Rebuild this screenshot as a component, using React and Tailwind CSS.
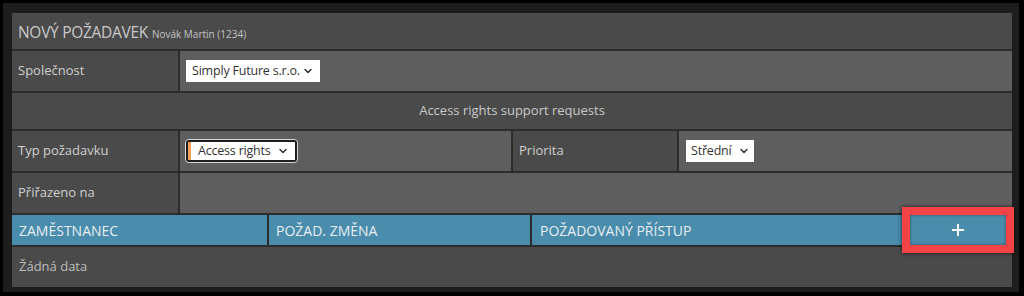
import { ChevronDown, Plus } from "lucide-react"

function Select({ label, className = "" }) {
  return (
    <div className={`flex items-center bg-white text-[12.5px] text-[#333] whitespace-nowrap ${className}`}>
      <span className="flex-1 tracking-[-0.2px]">{label}</span>
      <ChevronDown className="w-[12px] h-[12px] shrink-0 text-[#333]" strokeWidth={3} />
    </div>
  )
}

export default function App() {
  return (
    <div
      className="w-[1024px] h-[296px] bg-black pt-[3px] pl-[3px] pr-[5px] pb-[4px] overflow-hidden"
      style={{ fontFamily: '"Open Sans", "Noto Sans", sans-serif' }}
    >
      <div className="h-full bg-[#1d1d1d] pt-[10px] pl-[9px] pr-[7px] pb-[5px]">
        <div className="w-[1000px] h-[274px] bg-[#2c2c2c] flex flex-col">
          {/* Header */}
          <div className="h-[36px] mb-[2px] bg-[#4a4a4a] flex items-center pl-[6px] pt-[3px]">
            <span className="text-[15.5px] text-[#c9c9c9] tracking-[-0.3px]">NOVÝ POŽADAVEK</span>
            <span className="text-[10px] text-[#c4c4c4] ml-[4px] mt-[3px]">Novák Martin (1234)</span>
          </div>

          {/* Společnost */}
          <div className="h-[40px] mb-[2px] flex gap-[2px]">
            <div className="w-[166px] bg-[#4a4a4a] flex items-center pl-[6px] text-[13px] text-[#cfcfcf]">
              Společnost
            </div>
            <div className="flex-1 bg-[#5e5e5e] flex items-center pl-[6px]">
              <Select label="Simply Future s.r.o." className="w-[134px] h-[22px] pl-[6px] pr-[6px]" />
            </div>
          </div>

          {/* Section title */}
          <div className="h-[36px] mb-[2px] bg-[#4a4a4a] flex items-center justify-center text-[13px] text-[#c9c9c9]">
            Access rights support requests
          </div>

          {/* Typ požadavku / Priorita */}
          <div className="h-[40px] mb-[2px] flex gap-[2px]">
            <div className="w-[166px] bg-[#4a4a4a] flex items-center pl-[6px] text-[13px] text-[#cfcfcf]">
              Typ požadavku
            </div>
            <div className="w-[331px] bg-[#5e5e5e] flex items-center pl-[5px]">
              <div className="w-[113px] h-[24px] rounded-[4px] border border-[#d8d8d8] bg-[#d8d8d8]">
                <div className="h-full rounded-[3px] border-2 border-[#1f1f1f] bg-white flex items-center overflow-hidden">
                  <div className="w-[3px] h-full shrink-0 bg-[#f0a05a]" />
                  <Select label="Access rights" className="flex-1 h-full pl-[7px] pr-[6px]" />
                </div>
              </div>
            </div>
            <div className="w-[164px] bg-[#4a4a4a] flex items-center pl-[6px] text-[13px] text-[#cfcfcf]">
              Priorita
            </div>
            <div className="flex-1 bg-[#5e5e5e] flex items-center pl-[7px]">
              <Select label="Střední" className="w-[68px] h-[22px] pl-[5px] pr-[4px]" />
            </div>
          </div>

          {/* Přiřazeno na */}
          <div className="h-[40px] mb-[2px] flex gap-[2px]">
            <div className="w-[166px] bg-[#4a4a4a] flex items-center pl-[6px] text-[13px] text-[#cfcfcf]">
              Přiřazeno na
            </div>
            <div className="flex-1 bg-[#5e5e5e]" />
          </div>

          {/* Table header */}
          <div className="relative h-[30px] mb-[2px] flex gap-[2px] text-[14px] text-[#e6eef2]">
            <div className="w-[255px] bg-[#4a8cab] flex items-center pl-[7px]">ZAMĚSTNANEC</div>
            <div className="w-[261px] bg-[#4a8cab] flex items-center pl-[7px]">POŽAD. ZMĚNA</div>
            <div className="flex-1 bg-[#4a8cab] flex items-center pl-[8px]">POŽADOVANÝ PŘÍSTUP</div>
            <div className="absolute left-[890px] top-[-8px] w-[112px] h-[46px] border-[8px] border-[#f44346] shadow-[0_0_4px_rgba(0,0,0,0.7)]">
              <div className="w-full h-full bg-[#4a8cab] shadow-[inset_0_0_3px_rgba(0,0,0,0.45)] flex items-center justify-center">
                <Plus className="w-[18px] h-[18px] text-white" strokeWidth={2.6} />
              </div>
            </div>
          </div>

          {/* Empty */}
          <div className="flex-1 bg-[#4a4a4a] flex items-center pl-[7px] text-[13px] text-[#bdbdbd]">
            Žádná data
          </div>
        </div>
      </div>
    </div>
  )
}
